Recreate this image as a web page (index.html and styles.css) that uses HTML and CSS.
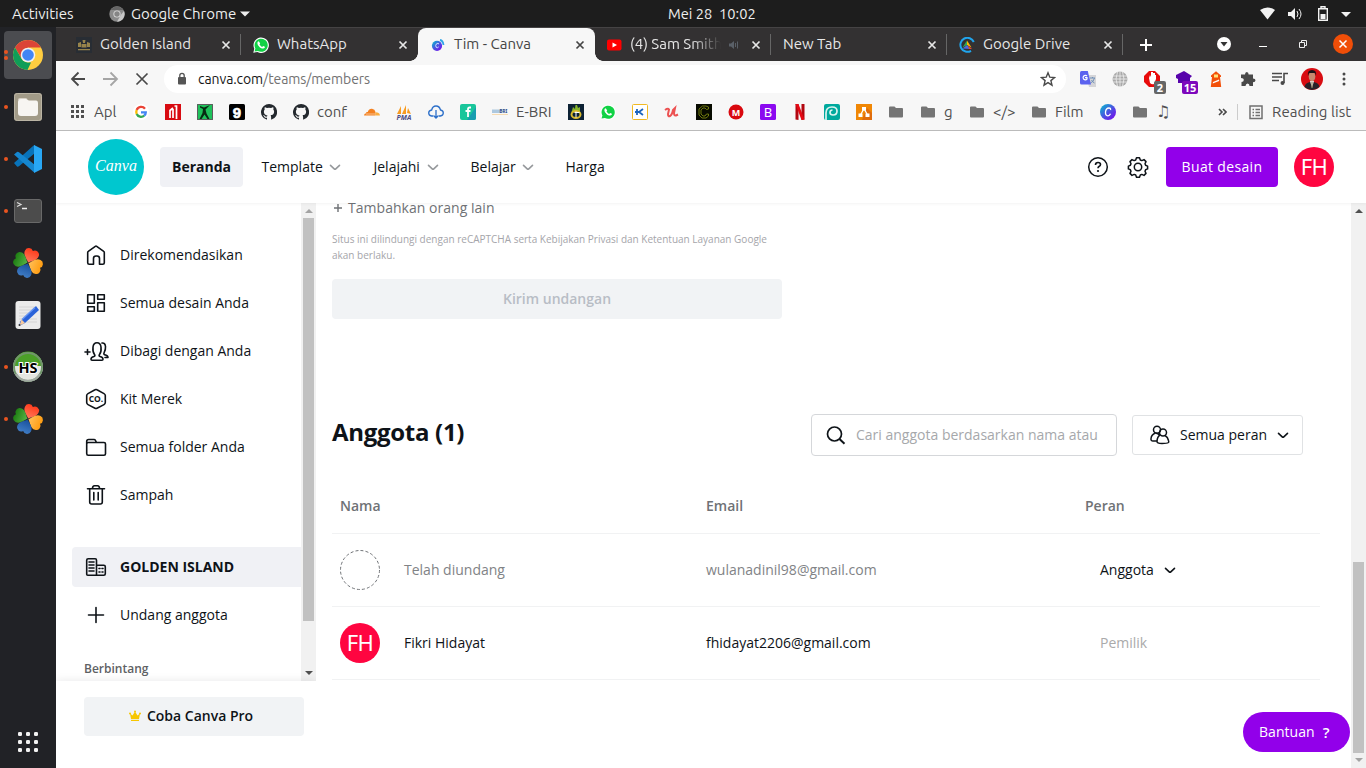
FILE: index.html
```html
<!DOCTYPE html>
<html lang="id">
<head>
<meta charset="utf-8">
<title>Tim - Canva</title>
<link rel="stylesheet" href="styles.css">
</head>
<body>
<svg class="defs" width="0" height="0">
  <symbol id="close" viewBox="0 0 10 10"><path d="M1.500 1.500l7 7M8.500 1.500l-7 7" stroke="currentColor" stroke-width="1.700" fill="none"/></symbol>
  <symbol id="folder" viewBox="0 0 16 16"><path d="M1 3.500q0-1 1-1h4.500l1.500 1.500h6q1 0 1 1v7.500q0 1-1 1h-12q-1 0-1-1z" fill="#757575"/></symbol>
  <symbol id="chev" viewBox="0 0 12 12"><path d="M1.500 4.300l3.700 3.500q.8.700 1.600 0l3.700-3.500" fill="none" stroke="currentColor" stroke-width="1.600" stroke-linecap="round"/></symbol>
  <symbol id="github" viewBox="0 0 16 16"><path d="M8 0a8 8 0 0 0-2.500 15.600c.4.100.5-.2.500-.4v-1.500c-2.200.5-2.700-1-2.700-1-.4-.9-.9-1.200-.9-1.200-.7-.5.100-.5.100-.5.800.1 1.200.8 1.200.8.700 1.200 1.900.9 2.300.7.100-.5.300-.9.500-1.100-1.800-.2-3.600-.9-3.600-3.900 0-.9.300-1.600.8-2.100-.1-.3-.4-1.100.1-2.200 0 0 .7-.2 2.200.8a7.500 7.500 0 0 1 4 0c1.500-1 2.200-.8 2.200-.8.500 1.100.2 1.900.1 2.200.5.500.8 1.200.8 2.100 0 3-1.800 3.700-3.600 3.900.3.300.6.800.6 1.500v2.300c0 .2.100.5.500.4A8 8 0 0 0 8 0z" fill="#24292e"/></symbol>
  <symbol id="whatsapp" viewBox="0 0 16 16"><path d="M.3 15.700l1-4A7.700 7.700 0 1 1 4.500 15z" fill="#fff"/><path d="M1.500 14.500l.9-3A6.600 6.600 0 1 1 4.900 14z" fill="#11d245"/><path d="M5.800 4.200c-.7 0-1.500.9-1.400 2 .2 2.700 3.600 5.600 5.800 5.400 1-.1 1.800-.9 1.700-1.800l-1.800-.9-.9 1c-1.300-.5-2.200-1.400-2.700-2.600l.7-.9z" fill="#fff"/></symbol>
  <linearGradient id="pr" x1="0" y1="0" x2="0" y2="1"><stop stop-color="#ff3c1c"/><stop offset="1" stop-color="#ff7a5c"/></linearGradient>
  <linearGradient id="po" x1="0" y1="0" x2="0" y2="1"><stop stop-color="#ff9c10"/><stop offset="1" stop-color="#ffc05a"/></linearGradient>
  <linearGradient id="pb" x1="0" y1="0" x2="0" y2="1"><stop stop-color="#3f7cc4"/><stop offset="1" stop-color="#174f9c"/></linearGradient>
  <linearGradient id="pg" x1="0" y1="0" x2="0" y2="1"><stop stop-color="#1d7d12"/><stop offset="1" stop-color="#58b548"/></linearGradient>
  <symbol id="clover" viewBox="0 0 32 32">
    <path transform="translate(16 16) rotate(22)" d="M0-.5C-2-3-8-5.500-7.400-10.500A4.200 4.200 0 0 1 0-13A4.200 4.200 0 0 1 7.400-10.500C8-5.500 2-3 0-.5z" fill="url(#pr)"/>
    <path transform="translate(16 16) rotate(112)" d="M0-.5C-2-3-8-5.500-7.400-10.500A4.200 4.200 0 0 1 0-13A4.200 4.200 0 0 1 7.400-10.500C8-5.500 2-3 0-.5z" fill="url(#po)"/>
    <path transform="translate(16 16) rotate(202)" d="M0-.5C-2-3-8-5.500-7.400-10.500A4.200 4.200 0 0 1 0-13A4.200 4.200 0 0 1 7.400-10.500C8-5.500 2-3 0-.5z" fill="url(#pb)"/>
    <path transform="translate(16 16) rotate(292)" d="M0-.5C-2-3-8-5.500-7.400-10.500A4.200 4.200 0 0 1 0-13A4.200 4.200 0 0 1 7.400-10.500C8-5.500 2-3 0-.5z" fill="url(#pg)"/>
  </symbol>
</svg>
<div class="desktop">
  <header class="topbar">
    <span class="activities">Activities</span>
    <svg class="appicon" width="16" height="16" viewBox="0 0 16 16"><circle cx="8" cy="8" r="7.700" fill="#8b8b8b"/><path d="M1.500 4a7.700 7.700 0 0 1 13 0H8z" fill="#666"/><path d="M15 5a7.700 7.700 0 0 1-7 10.700l4-7z" fill="#c8c8c8"/><circle cx="8" cy="8" r="3.600" fill="#ddd"/><circle cx="8" cy="8" r="2.700" fill="#858585"/></svg>
    <span class="appname">Google Chrome</span>
    <svg class="caret" width="10" height="6" viewBox="0 0 10 6"><path d="M0 .5h10l-5 5z" fill="#eee"/></svg>
    <span class="clock">Mei 28&nbsp; 10:02</span>
    <svg class="sys" width="110" height="20" viewBox="0 0 110 20"><path d="M4 6q7.500-5 15 0l-7.500 9.500z" fill="#f2f2f2"/><path d="M32 8h3l4-4v12l-4-4h-3z" fill="#f2f2f2"/><path d="M41 7q2 3 0 6m2-8q4 5 0 10" stroke="#f2f2f2" fill="none"/><path d="M62.700 4.700h8.600v11.600h-8.600zM65 2.700h4v2h-4z" fill="none" stroke="#f2f2f2" stroke-width="1.400"/><path d="M64.500 10h5v5h-5z" fill="#f2f2f2"/><path d="M85 8h10l-5 5z" fill="#f2f2f2"/></svg>
  </header>
  <div class="workspace">
  <aside class="dock">
    <div class="slot active"><svg width="32" height="32" viewBox="0 0 32 32"><circle cx="16" cy="16" r="15" fill="#ffcd40"/><path d="M3 8.500A15 15 0 0 1 29 8.500H16L9.500 19.500z" fill="#db4437"/><path d="M3 8.500L9.500 19.700Q12 23.500 16 23.500h3L15.500 31A15 15 0 0 1 3 8.500z" fill="#0f9d58"/><circle cx="16" cy="16" r="7.300" fill="#f1f1f1"/><circle cx="16" cy="16" r="5.800" fill="#4285f4"/></svg><i class="dot up"></i><i class="dot down"></i></div>
    <div class="slot"><svg width="32" height="32" viewBox="0 0 32 32"><rect x="2" y="2" width="28" height="28" rx="3" fill="#a29b88"/><rect x="2.500" y="2.500" width="27" height="27" rx="3" fill="none" stroke="#bbb5a5"/><path d="M6 9q0-2 2-2h5.500q2 0 2 2z" fill="#d8d2c6"/><path d="M6 11q0-3 3-3h5q2 1 3 1.500h7q2 0 2 3V22q0 3-3 3H9q-3 0-3-3z" fill="#f7f5f2"/></svg><i class="dot"></i></div>
    <div class="slot"><svg width="32" height="32" viewBox="0 0 32 32"><path d="M2 20l3 3.500Q6 24 7 23.200L23 10V2.500q-1-.5-2 .5z" fill="#0873ba"/><path d="M2 11.500L5 9q1-.6 2 .2L23 22v7q-1 .7-2-.4z" fill="#1587d0"/><path d="M22 2l8 4v20l-8 4z" fill="#28a7f4"/></svg><i class="dot"></i></div>
    <div class="slot"><svg width="32" height="32" viewBox="0 0 32 32"><rect x="2.500" y="4.500" width="27" height="23" rx="2.500" fill="#4c4c4c" stroke="#696969"/><path d="M5 7.500l4 2-4 2" fill="none" stroke="#ddd" stroke-width="1.200"/><path d="M10 13.500h5" stroke="#eee" stroke-width="1.500"/></svg><i class="dot"></i></div>
    <div class="slot"><svg width="32" height="32"><use href="#clover"/></svg></div>
    <div class="slot"><svg width="32" height="32" viewBox="0 0 32 32"><rect x="3.500" y="2" width="25" height="28" rx="3" fill="#ebebeb"/><path d="M7 8h16M7 11h13M7 14h11M7 17h10M7 20h18M7 23h18" stroke="#cfcfcf" stroke-width=".8"/><path d="M24 7l3 4-14 13-4 2-2 1 1.500-5z" fill="#2962d9"/><path d="M23 8.500l-13 12" stroke="#6695f2" stroke-width="1.500"/><path d="M9.500 20.500l3.500 3.500-5.500 2.500z" fill="#f6c99c"/><circle cx="7.500" cy="26" r="1" fill="#333"/></svg></div>
    <div class="slot"><svg width="32" height="32" viewBox="0 0 32 32"><circle cx="16" cy="16" r="15" fill="#e4e6e1"/><path d="M1.500 15A14.500 14.500 0 0 1 30.500 15z" fill="#4ba027"/><circle cx="16" cy="16" r="14" fill="none" stroke="#70966a" stroke-width="2"/><path d="M4 23a14 14 0 0 0 24 0" stroke="#a2aaa3" stroke-width="2" fill="none"/><text x="16" y="21.500" text-anchor="middle" class="hs">HS</text></svg><i class="dot"></i></div>
    <div class="slot"><svg width="32" height="32"><use href="#clover"/></svg><i class="dot"></i></div>
    <svg class="grid" width="20" height="20" viewBox="0 0 20 20" fill="#f2f2f2"><rect width="4" height="4" rx="1.300"/><rect x="8" width="4" height="4" rx="1.300"/><rect x="16" width="4" height="4" rx="1.300"/><rect y="8" width="4" height="4" rx="1.300"/><rect x="8" y="8" width="4" height="4" rx="1.300"/><rect x="16" y="8" width="4" height="4" rx="1.300"/><rect y="16" width="4" height="4" rx="1.300"/><rect x="8" y="16" width="4" height="4" rx="1.300"/><rect x="16" y="16" width="4" height="4" rx="1.300"/></svg>
  </aside>
  <div class="browser">
    <nav class="tabs">
      <div class="tab sep wider"><svg width="16" height="16" viewBox="0 0 16 16"><rect width="16" height="16" fill="#282d34"/><path d="M6.500 3h3l-.5 3h-2zM2 6l3-1v5H2zM14 6l-3-1v5h3zM5.500 7h5v3.500h-5zM2 12h12v1.300H2z" fill="#98844b"/></svg><span class="t">Golden Island</span><svg class="x" width="10" height="10"><use href="#close"/></svg></div>
      <div class="tab wider"><svg width="16" height="16"><use href="#whatsapp"/></svg><span class="t">WhatsApp</span><svg class="x" width="10" height="10"><use href="#close"/></svg></div>
      <div class="tab current wider"><svg width="16" height="16" viewBox="0 0 16 16"><defs><linearGradient id="cg" x1="0" y1="0" x2="1" y2="1"><stop stop-color="#00c4cc"/><stop offset=".5" stop-color="#4a54e1"/><stop offset="1" stop-color="#7d00ed"/></linearGradient></defs><circle cx="7" cy="8.800" r="5.100" fill="url(#cg)"/><path d="M9 7q-1-1.200-2.500-.2-1.500 1.500-.3 3.500 1.300 1 2.500-.4" stroke="#d4e4ff" stroke-width="1" fill="none"/><path d="M10 3q3 .5 3.500 5" stroke="#31a5e8" stroke-width="1.800" fill="none"/></svg><span class="t">Tim - Canva</span><svg class="x" width="10" height="10"><use href="#close"/></svg></div>
      <div class="tab sep yt"><svg width="16" height="16" viewBox="0 0 16 16"><rect x="1" y="2.500" width="14.500" height="11" rx="2" fill="#f00"/><path d="M6.500 5.500v5L11 8z" fill="#fff"/></svg><span class="t sam">(4) Sam Smith</span><svg class="aud" width="12" height="10" viewBox="0 0 12 10"><path d="M1 3.500h2L6 1v8L3 6.500H1z" fill="#5a6068"/><path d="M7.500 3v4M9.500 1.500v7" stroke="#5a6068"/></svg><svg class="x" width="10" height="10"><use href="#close"/></svg></div>
      <div class="tab sep"><span class="t">New Tab</span><svg class="x" width="10" height="10"><use href="#close"/></svg></div>
      <div class="tab sep"><svg width="16" height="16" viewBox="0 0 16 16"><path d="M14.800 5A7 7 0 1 0 12 13.800" fill="none" stroke="#21a5ed" stroke-width="2"/><path d="M8 3.500l-4.500 7L8 8z" fill="#31a852"/><path d="M8 3.500l4.500 7L8 8z" fill="#ffba00"/><path d="M3.500 11.500L8 8l3 4z" fill="#4b6bdc"/><path d="M9 8.500l4 3.500h-3z" fill="#e64435"/></svg><span class="t">Google Drive</span><svg class="x" width="10" height="10"><use href="#close"/></svg></div>
      <svg class="plus" width="14" height="14" viewBox="0 0 14 14"><path d="M7 1v12M1 7h12" stroke="#fff" stroke-width="2"/></svg>
      <svg class="win" width="140" height="34" viewBox="0 0 140 34"><circle cx="8" cy="16" r="7" fill="#fff"/><path d="M4.500 14h7L8 18.500z" fill="#333"/><path d="M43 18.500h8" stroke="#fff"/><path d="M83.500 14.500h5v5h-5zM85.500 14v-1.500h5v5H89" fill="none" stroke="#eee"/><circle cx="127" cy="16" r="10" fill="#f04e08"/><path d="M123.500 12.500l7 7m0-7l-7 7" stroke="#fff" stroke-width="1.500"/></svg>
    </nav>
    <div class="toolbar">
      <svg width="86" height="36" viewBox="0 0 86 36" fill="none" stroke-width="1.800"><path d="M21 18H8m6.500-6.500L8 18l6.500 6.500" stroke="#494949"/><path d="M39 18h14m-6.500-6.500L53 18l-6.500 6.500" stroke="#a5a5a5"/><path d="M72.500 12.500l11 11m0-11l-11 11" stroke="#494949" stroke-width="1.700"/></svg>
      <div class="url"><svg width="10" height="14" viewBox="0 0 10 14"><rect x="1" y="5" width="8" height="7.500" rx="1" fill="#555"/><path d="M2.800 5V3.500a2.200 2.200 0 0 1 4.400 0V5" fill="none" stroke="#555" stroke-width="1.300"/></svg><span class="addr"><b>canva.com</b>/teams/members</span><svg class="star" width="16" height="16" viewBox="0 0 16 16"><path d="M8 1.800l1.800 4.400 4.700.4-3.600 3 1.100 4.600L8 11.700l-4 2.500 1.100-4.600-3.600-3 4.700-.4z" fill="none" stroke="#494949" stroke-width="1.400"/></svg></div>
      <div class="exts">
        <svg width="16" height="16" viewBox="0 0 16 16"><path d="M6 4h10v12H9z" fill="#d5d5d8"/><path d="M10 7h5m-2.500-1v1m2 0q-1 4-4 5m1-3q1 2 3 3" stroke="#6e90b8" fill="none"/><path d="M1.500 0h6.300L11 13.500H1.500Q0 13.500 0 12V1.500Q0 0 1.500 0z" fill="#5b62ef"/><path d="M7 5.200A2.200 2.200 0 1 0 7 8V6.700H5" stroke="#fff" stroke-width="1.200" fill="none"/></svg>
        <svg width="16" height="16" viewBox="0 0 16 16" fill="none"><circle cx="8" cy="8" r="7.500" fill="#a9a9a9"/><path d="M1 5h14M.5 8h15M1 11h14M8 0v16M5.500 1q-3 7 0 14m5-14q3 7 0 14" stroke="#f0f0f0" stroke-width=".8"/></svg>
        <div class="ext"><svg width="16" height="16" viewBox="0 0 16 16"><path d="M5 0h6l5 5v6l-5 5H5l-5-5V5z" fill="#e80b0b"/><path d="M5 7l1 5q2 2 4 1l2-5V4h-1V2H9v4-5H7v5L6 4z" fill="#fff"/></svg><span class="badge gray">2</span></div>
        <div class="ext"><svg width="16" height="16" viewBox="0 0 16 16"><path d="M8 0l8 5-2 2v5H2V8L0 7V4z" fill="#5703ab"/></svg><span class="badge purple">15</span></div>
        <svg width="16" height="16" viewBox="0 0 16 16"><path d="M3 4.500L8 .3l5 4.200v1.500h-1l1.200 10H2.800L4 6H3z" fill="#f35009"/><path d="M6 3.500h4v3H6z" fill="#ffe47a"/><path d="M5 11l6-2.500.2 1.500-6.500 2.500z" fill="#fff"/></svg>
        <svg width="16" height="16" viewBox="0 0 16 16"><path d="M1 3.500h4Q5 1 6.800 1t1.800 2.500H13v4q2.500 0 2.500 1.800T13 11.200V15H9.500q0-2.500-1.900-2.500T5.500 15H1.500v-4q2.300 0 2.300-2T1 7z" fill="#494949"/></svg>
        <svg width="16" height="16" viewBox="0 0 16 16" fill="none" stroke="#494949" stroke-width="1.600"><path d="M0 2.500h10M0 6h10M0 9.500h7M12 12V2.500h4"/><circle cx="10.500" cy="12" r="2" fill="#494949" stroke="none"/></svg>
        <svg class="me" width="22" height="22" viewBox="0 0 22 22"><circle cx="11" cy="11" r="11" fill="#d80d12"/><path d="M3.500 19q.5-4 5.500-5h4q5 1 5.500 5Q11 25 3.500 19z" fill="#292229"/><path d="M9 13h4l-2 7z" fill="#eee"/><path d="M11 14v6" stroke="#877348"/><ellipse cx="11" cy="8.500" rx="3.300" ry="5" fill="#c48a70"/><path d="M7 8q-1-6 4-6t4 6l-1-3H8z" fill="#171318"/></svg>
        <svg class="dots" width="4" height="14" viewBox="0 0 4 14" fill="#494949"><circle cx="2" cy="2" r="1.500"/><circle cx="2" cy="7" r="1.500"/><circle cx="2" cy="12" r="1.500"/></svg>
      </div>
    </div>
    <div class="bookmarks">
      <svg width="16" height="16" viewBox="0 0 16 16" fill="#505050"><path d="M1 1h3v3H1zM6 1h3v3H6zM11 1h3v3h-3zM1 6h3v3H1zM6 6h3v3H6zM11 6h3v3h-3zM1 11h3v3H1zM6 11h3v3H6zM11 11h3v3h-3z"/></svg><span class="l apl">Apl</span>
      <svg width="16" height="16" viewBox="0 0 16 16"><circle cx="8" cy="8" r="8" fill="#fff"/><g fill="none" stroke-width="2.300"><path d="M12 4.800A4.800 4.800 0 0 0 3.700 6" stroke="#ea4335"/><path d="M3.700 6a5 5 0 0 0 0 4" stroke="#fbbc05"/><path d="M3.700 10A4.800 4.800 0 0 0 11.200 11.700" stroke="#34a853"/><path d="M11.200 11.700A4.500 4.500 0 0 0 12.800 8.300H8" stroke="#4285f4"/></g></svg>
      <svg width="16" height="16" viewBox="0 0 16 16"><path d="M0 0h16v16H0z" fill="#d80b11"/><path d="M5 14V6.500L8 4M8 14V5M11.500 15V2H9.500" stroke="#fff" stroke-width="1.700" fill="none"/></svg>
      <svg width="16" height="16" viewBox="0 0 16 16"><path d="M0 0h16v16H0z" fill="#1fc25b"/><path d="M.5.500h15v15H.5z" fill="none" stroke="#5e5c5e"/><path d="M13 1l-4.500 4.500 1 4 3 5.500h-2l-3-4.500-3 4.500H2.500l3-6 .5-4-3-1.500V2l4 1.500z" fill="#062b12"/></svg>
      <svg width="16" height="16" viewBox="0 0 16 16"><rect width="16" height="16" rx="1.500" fill="#000"/><text x="8" y="13.500" text-anchor="middle" class="nine">9</text></svg>
      <svg width="16" height="16"><use href="#github"/></svg>
      <svg width="16" height="16"><use href="#github"/></svg><span class="l conf">conf</span>
      <svg width="16" height="16" viewBox="0 0 16 16"><path d="M0 11.500q0-2 2-2.300 0-1.700 1.700-1.200Q5 4.500 8 4.800q3 .4 3.500 3.200l-.5 3.500z" fill="#f48120"/><path d="M11.500 8.200q4 0 4.500 3.300h-5z" fill="#faad3f"/><path d="M2 10h9" stroke="#fff" stroke-width=".5"/></svg>
      <svg width="16" height="16" viewBox="0 0 16 16"><path d="M1 10L5 2v8zM6 10l4-9v9zM11 9l1-5 3 6z" fill="#f89b20"/><text x="8" y="15.500" class="pma" text-anchor="middle">PMA</text></svg>
      <svg width="16" height="16" viewBox="0 0 16 16" fill="none" stroke="#2c6fc9" stroke-width="1.300"><path d="M5 12H3.500Q.7 11.500.7 9t3-3Q4.500 2 8 2t4.500 4q2.800.5 2.800 3t-3 3H11M8 6v8m-2.500-2.500L8 14l2.500-2.500"/></svg>
      <svg width="16" height="16" viewBox="0 0 16 16"><rect width="16" height="16" rx="2" fill="#19c69b"/><path d="M16 3v11q0 2-2 2H7z" fill="#189db0"/><path d="M11 3.500H9.500q-1.500 0-1.500 1.500v8M5.500 7h5" stroke="#fff" stroke-width="1.800" fill="none"/></svg>
      <svg width="16" height="16" viewBox="0 0 16 16"><path d="M0 5.500h8v3.500H0z" fill="#adc8df"/><text x="7.500" y="9.300" class="bri">BRI</text><path d="M0 10.500h16" stroke="#f5d3a0" stroke-width=".8"/></svg><span class="l ebri">E-BRI</span>
      <svg width="16" height="16" viewBox="0 0 16 16"><path d="M0 0h16v16H0z" fill="#0d2234"/><path d="M3.500 8l1.500-5 2 2 .5-4h1.500l1 3 2-1v6z" fill="#85b329"/><ellipse cx="8" cy="10.500" rx="4.500" ry="3.500" fill="none" stroke="#d8b92e" stroke-width="2"/><path d="M8 7.500v6M6.500 8.500h5" stroke="#fff"/></svg>
      <svg width="16" height="16"><use href="#whatsapp"/></svg>
      <svg width="16" height="16" viewBox="0 0 16 16"><rect x=".5" y=".5" width="15" height="15" rx="1" fill="#fff" stroke="#f1b922"/><path d="M5 5v6M11 5L7 8l4 3M3 8h4" stroke="#1c64bc" stroke-width="1.800" fill="none"/></svg>
      <svg width="16" height="16" viewBox="0 0 16 16"><path d="M1 6q3-2 4-.5L4 10q0 3 2 2 2-1 3-6l2-2-1 5q0 3 2 2.500l2-1" fill="none" stroke="#ec5252" stroke-width="2"/></svg>
      <svg width="16" height="16" viewBox="0 0 16 16"><path d="M0 0h16v16H0z" fill="#080b00"/><path d="M12.500 5V3L10 2H6.500L3 5v6l3 3h4l2.500-2v-2h-2l-1.500 2H7l-2-2V6l2-2h2l1.500 1.500z" fill="none" stroke="#7b8610" stroke-width=".9"/></svg>
      <svg width="16" height="16" viewBox="0 0 16 16"><circle cx="8" cy="8" r="7.500" fill="#d9090f"/><text x="8" y="11.500" text-anchor="middle" class="letter">M</text></svg>
      <svg width="16" height="16" viewBox="0 0 16 16"><rect width="16" height="16" rx="1.500" fill="#8b09f0"/><text x="8" y="13" text-anchor="middle" class="letter big">B</text></svg>
      <svg width="16" height="16" viewBox="0 0 16 16"><path d="M3.500 0h3v16l-3-.5zM9.500 0h3v15.500L9.500 16z" fill="#b20710"/><path d="M3.500 0h3l6 15.500L9.500 16z" fill="#e50914"/></svg>
      <svg width="16" height="16" viewBox="0 0 16 16"><rect width="16" height="16" rx="2" fill="#00a99d"/><path d="M2 16V9q0-6 6-6 5 0 5 4t-4 4q-3 0-3-2.500T8.500 6" fill="none" stroke="#d9f3ef" stroke-width="1.700"/></svg>
      <svg width="16" height="16" viewBox="0 0 16 16"><path d="M0 0h16v16H0z" fill="#f08705"/><path d="M11 4l5 5v7H6z" fill="#df6c0c"/><path d="M8 4.500L4.500 11M8 4.500l3.500 6.500" stroke="#fff" stroke-width="1.300"/><path d="M6 3h4v3.500H6zM2.500 9.500h4V13h-4zM9.500 9.500h4V13h-4z" fill="#fff"/></svg>
      <svg width="16" height="16"><use href="#folder"/></svg>
      <svg width="16" height="16"><use href="#folder"/></svg><span class="l g">g</span>
      <svg width="16" height="16"><use href="#folder"/></svg><span class="l code">&lt;/&gt;</span>
      <svg width="16" height="16"><use href="#folder"/></svg><span class="l film">Film</span>
      <svg width="16" height="16" viewBox="0 0 16 16"><circle cx="8" cy="8" r="8" fill="url(#cg)"/><path d="M10.500 6q.5-2-1.500-2Q6 4 5.500 8q-.2 4 2.500 3.800 1.500 0 2.500-2" stroke="#fff" stroke-width="1.300" fill="none"/></svg>
      <svg width="16" height="16"><use href="#folder"/></svg><span class="l music">♫</span>
      <svg class="more" width="9" height="8" viewBox="0 0 9 8"><path d="M1 1l3 3-3 3M5 1l3 3-3 3" fill="none" stroke="#494949" stroke-width="1.600"/></svg>
      <div class="reading"><svg width="16" height="16" viewBox="0 0 16 16" fill="none" stroke="#707070"><rect x="2" y="2" width="12" height="12.500" stroke-width="1.500"/><path d="M4.500 5.500h1.500M7.500 5.500h4.500M4.500 8.500h1.500M7.500 8.500h4.500M4.500 11.500h1.500M7.500 11.500h4.500" stroke-width="1.400"/></svg><span class="l">Reading list</span></div>
    </div>

    <div class="page">
      <header class="head">
        <div class="logo"><span>Canva</span></div>
        <span class="nav home">Beranda</span>
        <span class="nav n1"><span>Template</span><svg width="12" height="12"><use href="#chev"/></svg></span>
        <span class="nav n2"><span>Jelajahi</span><svg width="12" height="12"><use href="#chev"/></svg></span>
        <span class="nav n3"><span>Belajar</span><svg width="12" height="12"><use href="#chev"/></svg></span>
        <span class="nav n4"><span>Harga</span></span>
        <div class="right">
          <svg width="24" height="24" viewBox="0 0 24 24" fill="none" stroke="#0e1318" stroke-width="1.500"><circle cx="12" cy="12" r="9.300"/><path d="M9.500 10q0-2.500 2.500-2.500t2.500 2q0 1.200-1.500 2-1 .6-1 1.800" stroke-width="1.600"/><circle cx="12" cy="16" r="1.100" fill="#0e1318" stroke="none"/></svg>
          <svg width="24" height="24" viewBox="0 0 24 24" fill="none" stroke="#0e1318" stroke-width="1.500" stroke-linejoin="round"><circle cx="12" cy="12" r="3.700"/><path d="M10.500 2.700h3l.8 2.300 1.500.6 2.200-1 2 2-1 2.200.6 1.500 2 .8v2.800l-2 .8-.6 1.500 1 2.200-2 2-2.200-1-1.500.6-.8 2.300h-3l-.8-2.300-1.500-.6-2.200 1-2-2 1-2.200-.6-1.500-2-.8v-2.800l2-.8.6-1.500-1-2.200 2-2 2.200 1 1.500-.6z"/></svg>
          <button class="create">Buat desain</button>
          <span class="avatar">FH</span>
        </div>
      </header>
      <div class="body">
        <div class="side">
          <div class="scroller">
            <div class="menu">
              <a><svg width="24" height="24" viewBox="0 0 24 24" class="ic"><path d="M3.700 9.500q0-.8.600-1.200l7-5q.7-.5 1.400 0l7 5q.6.400.6 1.200v10.200q0 1.500-1.500 1.500h-3.300V15.500q0-2.500-2.500-2.500h-1q-2.500 0-2.500 2.500v5.700H5.200q-1.500 0-1.500-1.500z"/></svg><span>Direkomendasikan</span></a>
              <a><svg width="24" height="24" viewBox="0 0 24 24" class="ic"><path d="M3.700 3.700h6.600v8.600H3.700zM13.700 3.700h6.600v4.600h-6.600zM3.700 15.700h6.600v4.600H3.700zM13.700 11.700h6.600v8.600h-6.600z"/></svg><span>Semua desain Anda</span></a>
              <a><svg width="26" height="24" viewBox="0 0 26 24" class="ic wide"><path d="M1 13h5M3.500 10.500v5"/><path d="M7 20.300q0-2 3-2.800 1.500-.4.500-2Q8.500 13 9 8q.5-4.300 4-4.300T17 8q.5 5-1.500 7.500-1 1.600.5 2 3 .8 3 2.800 0 1-1 1H8q-1 0-1-1zM18 4q3-.5 3.500 3.500.3 3-1.500 6.500-.7 1.500 1.500 2 2.500.7 2.500 2.500H21"/></svg><span>Dibagi dengan Anda</span></a>
              <a><svg width="24" height="24" viewBox="0 0 24 24" class="ic"><path d="M12 2.500q.5 0 1 .3l7 3.800q1.300.7 1.300 2v7q0 1.300-1.300 2l-7 3.600q-1 .5-2 0l-7-3.600q-1.300-.7-1.300-2v-7q0-1.300 1.300-2l7-3.800q.5-.3 1-.3z"/><text x="12" y="15" text-anchor="middle" class="co">CO.</text></svg><span>Kit Merek</span></a>
              <a><svg width="24" height="24" viewBox="0 0 24 24" class="ic"><path d="M2.700 18.500v-12q0-2 2-2H10q1 0 1.500 1l1 2H20q1.500 0 1.500 1.500v9.700q0 1.500-1.500 1.500H4.200q-1.500 0-1.500-1.700zM2.700 9q0-1.500 1.500-1.500H13"/></svg><span>Semua folder Anda</span></a>
              <a><svg width="24" height="24" viewBox="0 0 24 24" class="ic"><path d="M3.500 5.700h17M5.700 6v13q0 2 2 2h8.600q2 0 2-2V6M8.500 5.500q0-2.800 2-2.800h3q2 0 2 2.800M9.800 9.500v7.500M14.200 9.500v7.500"/></svg><span>Sampah</span></a>
              <a class="sel"><svg width="24" height="24" viewBox="0 0 24 24" class="ic"><path d="M12.500 20.300H3.700q-1 0-1-1V5.200q0-1.500 1.500-1.500h7q1.300 0 1.300 1.500zM12.500 20.300h7.300q1.500 0 1.500-1.500v-7q0-1.500-1.500-1.500h-7.300M5 7h5M5 10h5M5 13h5M5 16h5M15 13.500h1M18 13.500h1M15 17h1M18 17h1"/></svg><span>GOLDEN ISLAND</span></a>
              <a><svg width="24" height="24" viewBox="0 0 24 24" class="ic"><path d="M4.500 12h15M12 4.500v15"/></svg><span>Undang anggota</span></a>
              <h4>Berbintang</h4>
            </div>
            <div class="bar sbar"><i class="up"></i><b></b><i class="down"></i></div>
          </div>
          <div class="pro"><button><svg width="12" height="12" viewBox="0 0 12 12" fill="#f7c600"><path d="M1 3.500l2.500 2L6 1.500l2.500 4 2.500-2L10 9H2z"/><path d="M2 9.800h8v1.200H2z"/><circle cx="1" cy="3.500" r="1"/><circle cx="6" cy="1.500" r="1"/><circle cx="11" cy="3.500" r="1"/></svg><span>Coba Canva Pro</span></button></div>
        </div>
        <main>
          <div class="add"><svg width="12" height="12" viewBox="0 0 12 12"><path d="M2 6h8M6 2v8" stroke="#6f7276" stroke-width="1.400"/></svg><span>Tambahkan orang lain</span></div>
          <p>Situs ini dilindungi dengan reCAPTCHA serta Kebijakan Privasi dan Ketentuan Layanan Google<br>akan berlaku.</p>
          <button class="send">Kirim undangan</button>
          <div class="members">
            <h2>Anggota (1)</h2>
            <div class="search"><svg width="24" height="24" viewBox="0 0 24 24" fill="none" stroke="#0e1318" stroke-width="1.700"><circle cx="10.500" cy="11" r="7"/><path d="M15.500 16l5 4.700" stroke-width="2"/></svg><span>Cari anggota berdasarkan nama atau</span></div>
            <div class="roles"><svg width="24" height="24" viewBox="0 0 24 24" fill="none" stroke="#0e1318" stroke-width="1.500"><circle cx="9" cy="6.700" r="3.500"/><circle cx="15" cy="9.500" r="3.500"/><path d="M9.500 18H5q-2.300 0-2-2.500.5-4 4-5.300M12.300 12q-3 1-3.300 6.500 0 2 5 2t6.500-1q.5-.5 0-2-.7-3.500-3.500-5M7.500 10q3 .5 4 2"/></svg><span>Semua peran</span><svg width="12" height="12"><use href="#chev"/></svg></div>
          </div>
          <div class="table">
            <div class="row th"><span>Nama</span><span>Email</span><span>Peran</span></div>
            <div class="row mute"><svg width="40" height="40" viewBox="0 0 40 40"><circle cx="20" cy="20" r="19.500" fill="none" stroke="#6f7276" stroke-dasharray="3 2.100"/></svg><span class="cell">Telah diundang</span><span class="cell">wulanadinil98@gmail.com</span><span class="role"><span class="cell">Anggota</span><svg width="12" height="12"><use href="#chev"/></svg></span></div>
            <div class="row"><span class="avatar">FH</span><span class="cell">Fikri Hidayat</span><span class="cell">fhidayat2206@gmail.com</span><span class="role owner"><span class="cell">Pemilik</span></span></div>
          </div>
          <div class="help">Bantuan<span>?</span></div>
        </main>
        <div class="bar mbar"><i class="up"></i><b></b><i class="down"></i></div>
      </div>
    </div>
  </div>
  </div>
</div>
</body>
</html>
```
FILE: styles.css
```css
* { box-sizing: border-box; }
body { margin: 0; overflow: hidden; font-family: "Open Sans", "Noto Sans", sans-serif; font-size: 14px; color: #0e1318; }
svg { flex: none; display: block; }
button { border: 0; font: inherit; padding: 0; }
.defs { position: absolute; }
.desktop { width: 1366px; height: 768px; display: flex; flex-direction: column; }

/* system bar */
.topbar { height: 27px; background: #1d1d1d; color: #eee; font: 15px/27px Ubuntu, "Noto Sans", sans-serif; display: flex; align-items: center; flex: none; padding-left: 12px; white-space: nowrap; }
.activities { width: 97px; }
.appname { margin-left: 6px; width: 104px; }
.caret { margin-left: 5px; }
.clock { margin-left: 418px; width: 88px; font-size: 14.670px; margin-top: -1px; }
.sys { margin-left: 500px; margin-right: -4px; }
.workspace { flex: 1; display: flex; min-height: 0; }

/* dock */
.dock { width: 56px; flex: none; background: #212226; padding: 4px; display: flex; flex-direction: column; gap: 4px; }
.slot { width: 48px; height: 48px; display: flex; align-items: center; justify-content: center; position: relative; border-radius: 4px; }
.slot.active { background: #4b4c50; }
.dot { position: absolute; left: 0; top: 22px; width: 4px; height: 4px; border-radius: 50%; background: #e95420; }
.dot.up { top: 19px; }
.dot.down { top: 25px; }
.grid { margin: auto 14px 12px; }
.hs { font: bold 14.500px "Noto Sans", sans-serif; fill: #000; stroke: #fff; stroke-width: 2px; paint-order: stroke; }

/* browser frame */
.browser { width: 1310px; flex: none; display: flex; flex-direction: column; }
.tabs { height: 34px; flex: none; background: #333132; border-top: 1px solid #454344; display: flex; padding-left: 8px; align-items: center; color: #e7e7e7; font: 15px/33px Ubuntu, "Noto Sans", sans-serif; white-space: nowrap; }
.tab { width: 176px; height: 33px; display: flex; align-items: center; padding: 0 10px 0 12px; flex: none; position: relative; }
.tab.wider { width: 177px; }
.tab.yt { padding-left: 11px; }
.tab .t { margin-left: 8px; padding-bottom: 2px; line-height: 31px; }
.tab > .t:first-child { margin-left: 0; }
.tab .x { margin-left: auto; }
.tab.sep::after { content: ""; position: absolute; right: 0; top: 6px; height: 21px; width: 1px; background: #666; }
.tab.current { background: #f7f7f7; color: #454545; border-radius: 8px 8px 0 0; }
.tab.current::before, .tab.current::after { content: ""; position: absolute; bottom: 0; width: 8px; height: 8px; }
.tab.current::before { left: -8px; background: radial-gradient(circle at 0 0, transparent 7.500px, #f7f7f7 8px); }
.tab.current::after { right: -8px; background: radial-gradient(circle at 100% 0, transparent 7.500px, #f7f7f7 8px); }
.sam { width: 91px; overflow: hidden; mask-image: linear-gradient(90deg, #000 68%, transparent); }
.aud { margin-left: 7px; }
.plus { margin-left: 16px; }
.win { margin-left: 63px; }
.toolbar { height: 36px; flex: none; background: #f7f7f7; display: flex; align-items: center; padding-left: 8px; }
.url { width: 902px; height: 28px; border-radius: 14px; background: #fff; margin-left: 14px; display: flex; align-items: center; padding: 0 10px 0 13px; font: 14px/28px Ubuntu, "Noto Sans", sans-serif; color: #727272; }
.addr { margin-left: 11px; letter-spacing: -.080px; }
.addr b { font-weight: 400; color: #171717; }
.star { margin-left: auto; }
.exts { display: flex; align-items: center; gap: 16px; padding-left: 14px; }
.ext { position: relative; }
.badge { position: absolute; left: 10px; top: 10px; height: 13px; width: 12px; border-radius: 2px; color: #fff; font: bold 11px/13px "Noto Sans", sans-serif; text-align: center; }
.badge.gray { background: #666; }
.badge.purple { background: #7d08bc; width: 16px; left: 6px; }
.exts .me { margin: 0 0 0 -3px; }
.exts .dots { margin-left: 3px; }
.bookmarks { height: 34px; flex: none; background: #f7f7f7; border-bottom: 1px solid #bdbdbd; display: flex; align-items: center; gap: 16px; padding: 0 0 3px 14px; font: 15px/30px Ubuntu, "Noto Sans", sans-serif; color: #505050; white-space: nowrap; }
.l { margin-left: -8px; }
.apl { width: 23px; }
.conf { width: 31px; }
.ebri { width: 36px; }
.g { width: 9px; }
.code { width: 22px; }
.film { width: 29px; }
.music { width: 12px; font-family: "DejaVu Sans", sans-serif; font-size: 16px; }
.more { margin-left: 34px; }
.reading { border-left: 1px solid #ccc; height: 16px; display: flex; align-items: center; margin-left: -6px; padding-left: 10px; gap: 16px; letter-spacing: .080px; }
.pma { font: italic bold 7px "Noto Sans", sans-serif; fill: #4c4c86; }
.bri { font: bold 4.500px "Noto Sans", sans-serif; fill: #1d4684; }
.letter { font: bold 9px "Noto Sans", sans-serif; fill: #fff; }
.letter.big { font-size: 13px; font-weight: 400; }
.nine { font: bold 15px "Liberation Sans", sans-serif; fill: #fff; stroke: #fff; stroke-width: .6px; }

/* Canva page */
.page { flex: 1; background: #fff; display: flex; flex-direction: column; min-height: 0; }
.head { height: 72px; flex: none; display: flex; align-items: center; padding: 0 32px; position: relative; z-index: 2; background: #fff; box-shadow: 0 1px 3px rgba(14,19,24,.05); white-space: nowrap; }
.logo { width: 56px; height: 56px; border-radius: 50%; background: #00c7cf; color: #fff; font: italic 16px/54px "Liberation Serif", serif; text-align: center; }
.nav { display: flex; align-items: center; }
.nav span, .menu a span, .cell, .search span, .roles span, .pro span { padding-bottom: 1px; }
.nav svg { color: #96999c; margin-left: auto; }
.home { margin-left: 16px; width: 83px; height: 40px; border-radius: 4px; background: #f0f1f5; font-weight: 700; justify-content: center; padding-bottom: 1px; }
.n1 { width: 79px; margin-left: 18.500px; }
.n2 { width: 65px; margin-left: 33px; }
.n3 { width: 63px; margin-left: 32px; }
.n4 { margin-left: 32px; }
.right { margin-left: auto; display: flex; align-items: center; gap: 16px; }
.create { width: 112px; height: 40px; border-radius: 4px; background: #9200ea; color: #fff; letter-spacing: .35px; padding-bottom: 1px; }
.avatar { width: 40px; height: 40px; border-radius: 50%; background: #ff0540; color: #fff; font: 400 22px/39px "Noto Sans", "Open Sans", sans-serif; text-align: center; flex: none; letter-spacing: -.5px; }
.body { flex: 1; display: flex; min-height: 0; }
.side { width: 260px; flex: none; display: flex; flex-direction: column; }
.scroller { height: 478px; display: flex; overflow: hidden; position: relative; }
.menu { width: 245px; padding: 32px 0 0 16px; }
.menu a { display: flex; align-items: center; height: 40px; margin-bottom: 8px; padding-left: 12px; border-radius: 4px 0 0 4px; white-space: nowrap; }
.menu a svg + span { margin-left: 12px; }
.menu a .wide { margin: 0 -2px 0 0; }
.menu a.sel { margin-top: 32px; background: #f0f1f5; font-weight: 700; }
.menu h4 { margin: 24px 0 0 12px; font-size: 12px; line-height: 20px; font-weight: 600; color: #5e6164; }
.ic { fill: none; stroke: #0e1318; stroke-width: 1.600; stroke-linejoin: round; stroke-linecap: round; }
.co { font: bold 8.500px "Open Sans", sans-serif; fill: #0e1318; stroke: none; }
.bar { width: 15px; background: #f1f1f1; position: relative; display: flex; flex-direction: column; align-items: center; flex: none; }
.bar b { background: #c1c1c1; width: 11px; }
.bar i { width: 0; height: 0; border: 4px solid transparent; }
.bar .up { border-bottom-color: #505050; border-top: 0; margin: 6px 0 5px; }
.bar .down { border-top-color: #505050; border-bottom: 0; margin: auto 0 6px; }
.sbar .up { border-bottom-color: #a3a3a3; }
.sbar b { height: 403px; }
.pro { flex: 1; background: #fff; padding: 16px 0 0 28px; box-shadow: 0 -1px 8px rgba(14,19,24,.08); clip-path: inset(-9px 0 0 0); z-index: 1; }
.pro button { width: 220px; height: 39px; border-radius: 4px; background: #f1f3f5; display: flex; justify-content: center; align-items: center; gap: 6px; font-weight: 600; color: #0e1318; padding: 0 6px 1px 0; }
main { width: 1035px; padding-left: 16px; position: relative; }
.add { display: flex; align-items: center; gap: 4px; line-height: 20px; color: #6f7276; margin-top: -5px; letter-spacing: .030px; }
p { margin: 13px 0 0; font-size: 10px; line-height: 16px; color: #a5a5aa; white-space: nowrap; }
.send { display: block; width: 450px; height: 40px; margin-top: 16px; background: #f1f3f5; color: #b8bdc5; font-weight: 600; border-radius: 4px; padding-bottom: 1px; }
.members { margin-top: 95px; height: 42px; display: flex; align-items: center; white-space: nowrap; }
h2 { margin: 0; width: 479px; font-size: 24px; line-height: 32px; font-weight: 700; padding-bottom: 7px; letter-spacing: -.300px; }
.search { width: 306px; height: 42px; border: 1px solid #d5d7da; border-radius: 4px; display: flex; align-items: center; padding-left: 12px; gap: 8px; color: #a6a8ab; }
.roles { margin-left: 15px; width: 171px; height: 40px; border: 1px solid #e0e2e4; border-radius: 3px; display: flex; align-items: center; padding: 0 13px 0 15px; }
.roles span { margin-left: 8px; }
.roles svg:last-child { margin-left: auto; }
.table { margin-top: 22px; width: 988px; }
.row { height: 73px; border-bottom: 1px solid #f1f2f3; display: grid; grid-template-columns: 64px 302px 394px 1fr; align-items: center; padding-left: 8px; }
.row.th { height: 56px; grid-template-columns: 366px 379px 1fr; font-weight: 600; color: #6f7276; }
.mute { color: #818386; }
.role { color: #0e1318; display: flex; align-items: center; gap: 10px; }
.role.owner { color: #aaa; }
.help { position: absolute; right: 1px; bottom: 16px; width: 107px; height: 40px; border-radius: 20px; background: #9200ea; color: #fff; display: flex; align-items: center; gap: 8px; padding: 0 0 1px 16px; letter-spacing: .050px; }
.help span { font-size: 15px; font-weight: 600; }
.mbar b { height: 191px; margin-top: 344px; }
.mbar .down { border-top-color: #a3a3a3; }
```
